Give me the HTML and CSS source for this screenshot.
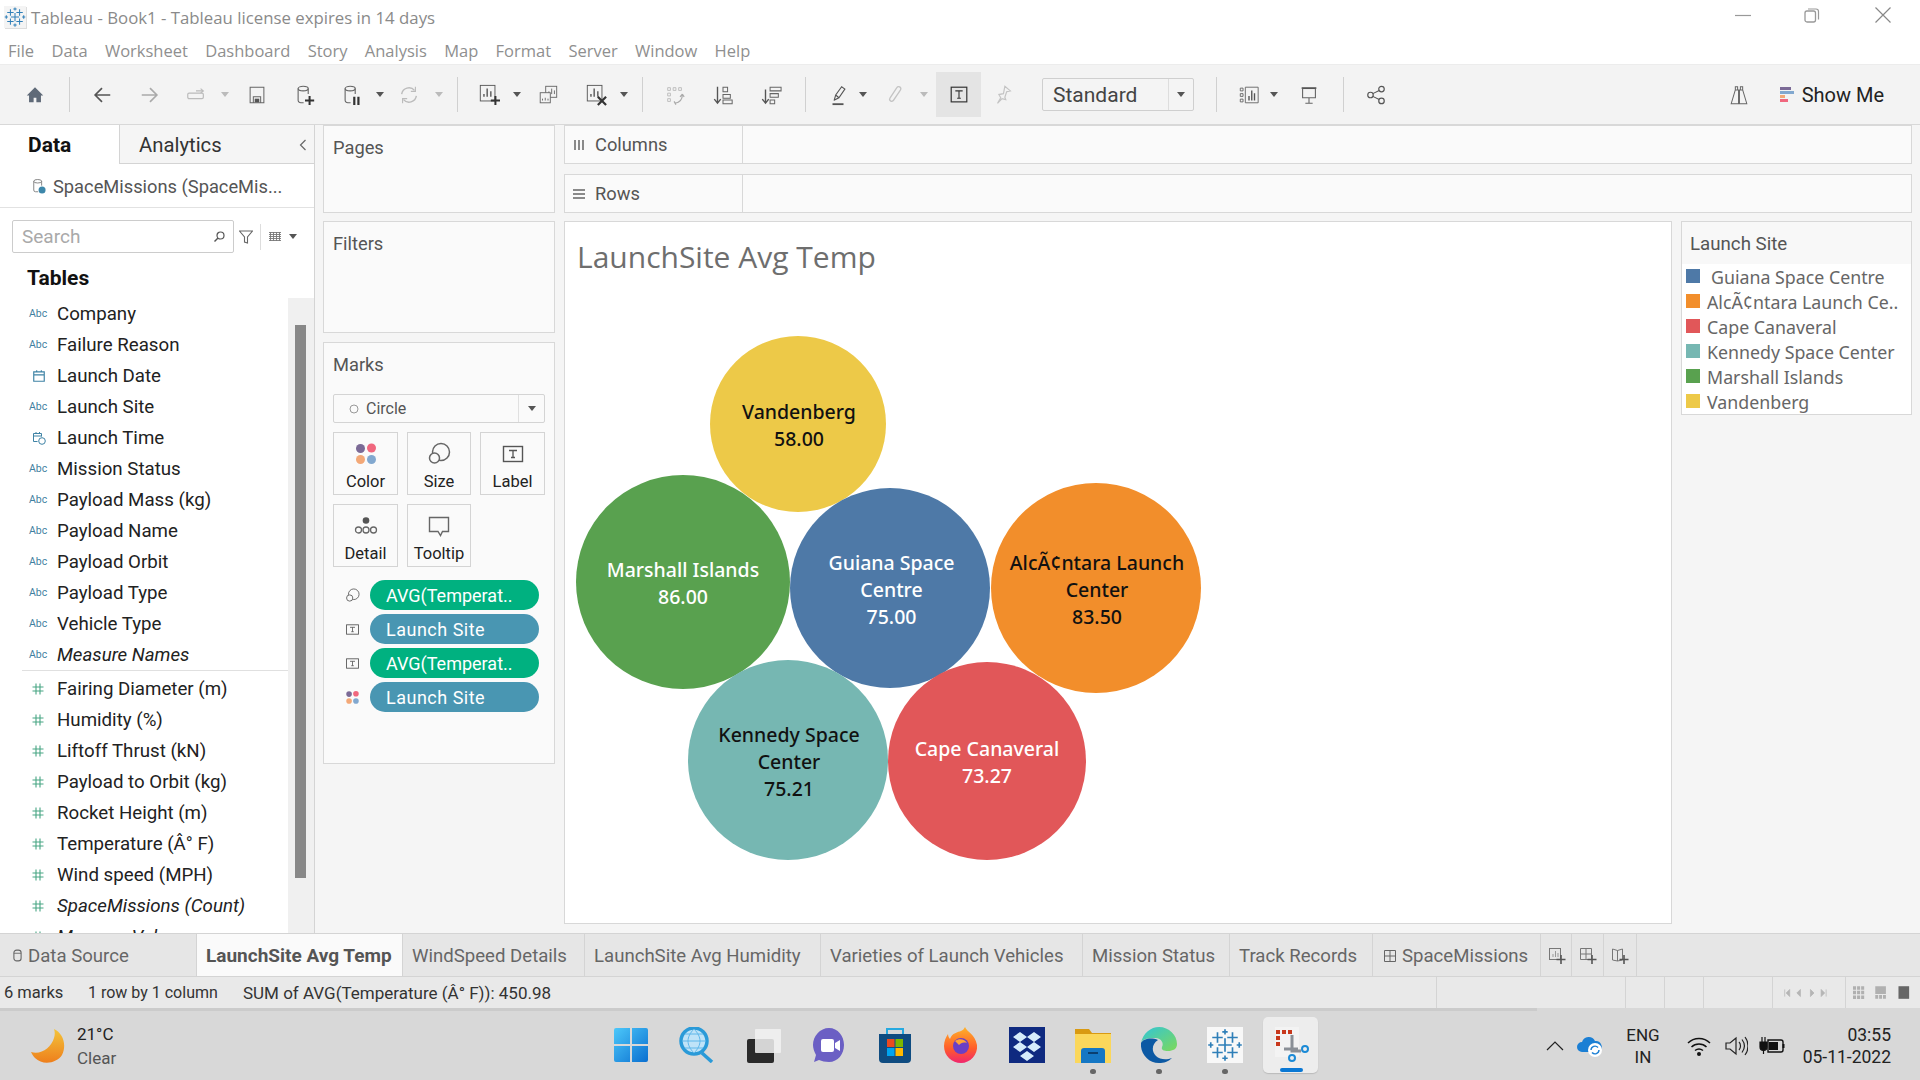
FILE: index.html
```html
<!DOCTYPE html>
<html lang="en">
<head>
<meta charset="utf-8">
<title>Tableau - Book1</title>
<link rel="stylesheet" href="styles.css">
</head>
<body>
<svg class="defs" width="0" height="0">
  <defs>
    <symbol id="tabl" viewBox="0 0 24 24"><g fill="none" stroke="#2f7fb8" stroke-width="1.100"><path d="M12 7.500v9M7.500 12h9M7 3.500v7M3.500 7h7M17 3.500v7M13.500 7h7M7 13.500v7M3.500 17h7M17 13.500v7M13.500 17h7M12 1.500v3.500M10.200 3.200h3.600M12 19v3.500M10.200 20.800h3.600M2.500 10.200v3.600M.8 12h3.400M21.500 10.200v3.600M19.800 12h3.400"/></g></symbol>
    <symbol id="tbox" viewBox="0 0 24 24"><rect x="2.500" y="4.500" width="19" height="15" fill="none" stroke="#555" stroke-width="1.400"/><path d="M8 8.500h8M12 8.500v7M10 15.500h4" fill="none" stroke="#555" stroke-width="1.300"/></symbol>
    <symbol id="size" viewBox="0 0 24 24"><circle cx="14" cy="10" r="8.500" fill="none" stroke="#666" stroke-width="1.500"/><circle cx="7.500" cy="16" r="5" fill="#fafafa" stroke="#666" stroke-width="1.500"/></symbol>
    <symbol id="dots" viewBox="0 0 24 24"><circle cx="6.500" cy="6.500" r="4.500" fill="#7b6a96"/><circle cx="17.500" cy="6" r="4.500" fill="#f0677e"/><circle cx="6.500" cy="17.500" r="4.500" fill="#f3a877"/><circle cx="17.500" cy="17.500" r="4.500" fill="#82a8cf"/></symbol>
    <symbol id="hash" viewBox="0 0 12 12"><path d="M4 0.500v11M8 0.500v11M0.500 4h11M0.500 8h11" fill="none" stroke="#47a583" stroke-width="1.100"/></symbol>
    <symbol id="plusbar" viewBox="0 0 24 24"><rect x="2.500" y="1.500" width="16" height="17" fill="none" stroke="#555"/><path d="M6.500 14v-3M10 14V5M14 14V8" stroke="#555" stroke-width="1.500"/><path d="M19 13v10M14 18h10" stroke="#333" stroke-width="2.200"/></symbol>
  </defs>
</svg>

<header class="titlebar">
  <svg class="logo" viewBox="0 0 24 24"><use href="#tabl"/></svg>
  <span class="title-text">Tableau - Book1 - Tableau license expires in 14 days</span>
  <div class="winbtns">
    <svg class="win" viewBox="0 0 16 16"><path d="M0 8.500h16" stroke="#999" stroke-width="1.200"/></svg>
    <svg class="win" viewBox="0 0 16 16"><rect x="1" y="4" width="10.500" height="11" rx="2" fill="none" stroke="#999" stroke-width="1.300"/><path d="M4 2h8a2.500 2.500 0 0 1 2.500 2.500v8" fill="none" stroke="#999" stroke-width="1.200"/></svg>
    <svg class="win" viewBox="0 0 16 16"><path d="M0.500 0.500l15 15M15.500 0.500l-15 15" stroke="#888" stroke-width="1.200"/></svg>
  </div>
</header>

<nav class="menu">
  <span>File</span><span>Data</span><span>Worksheet</span><span>Dashboard</span><span>Story</span><span>Analysis</span><span>Map</span><span>Format</span><span>Server</span><span>Window</span><span>Help</span>
</nav>

<div class="toolbar">
  <svg class="ti" viewBox="0 0 24 24"><path d="M12 3.500L3 12.500h2.500V20h5v-5h3v5h5v-7.500H21z" fill="#5f6a78"/></svg>
  <i class="sep"></i>
  <svg class="ti" viewBox="0 0 24 24"><path d="M21 12H5M12 4.500L4.500 12l7.500 7.500" fill="none" stroke="#555" stroke-width="1.800"/></svg>
  <svg class="ti" viewBox="0 0 24 24"><path d="M3 12h16M12 4.500l7.500 7.500-7.500 7.500" fill="none" stroke="#aaa" stroke-width="1.800"/></svg>
  <svg class="ti" viewBox="0 0 24 24"><rect x="3" y="10" width="17" height="6" rx="1.500" fill="none" stroke="#bbb" stroke-width="1.300"/><path d="M12 7.500h8M17 5l3 2.500-3 2.500" fill="none" stroke="#bbb" stroke-width="1.300"/></svg>
  <i class="car off"></i>
  <svg class="ti" viewBox="0 0 24 24"><path d="M4.500 3.500h15v17h-15zM8 20v-6h8v6" fill="none" stroke="#666" stroke-width="1.100"/><rect x="9.500" y="16" width="5" height="4" fill="#555"/></svg>
  <svg class="ti" viewBox="0 0 24 24"><ellipse cx="10" cy="5" rx="5.500" ry="2.500" fill="none" stroke="#666" stroke-width="1.200"/><path d="M4.500 5v13a3 3 0 0 0 3 2.500h3M15.500 5v6" fill="none" stroke="#666" stroke-width="1.200"/><path d="M17 13v10M12 18h10" stroke="#333" stroke-width="2.200"/></svg>
  <svg class="ti" viewBox="0 0 24 24"><ellipse cx="10" cy="5" rx="5.500" ry="2.500" fill="none" stroke="#666" stroke-width="1.200"/><path d="M4.500 5v13a3 3 0 0 0 3 2.500h3M15.500 5v6" fill="none" stroke="#666" stroke-width="1.200"/><path d="M14.500 14v9M19 14v9" stroke="#333" stroke-width="2.400"/></svg>
  <i class="car"></i>
  <svg class="ti" viewBox="0 0 24 24"><path d="M4 11a8 8 0 0 1 14-4M20 13a8 8 0 0 1-14 4" fill="none" stroke="#bbb" stroke-width="1.500"/><path d="M19 3v5h-5M5 21v-5h5" fill="none" stroke="#bbb" stroke-width="1.200"/></svg>
  <i class="car off"></i>
  <i class="sep"></i>
  <svg class="ti" viewBox="0 0 24 24"><use href="#plusbar"/></svg>
  <i class="car"></i>
  <svg class="ti" viewBox="0 0 24 24"><rect x="9.500" y="2.500" width="12" height="12" fill="none" stroke="#666"/><path d="M13 11V8M16 11V5M19 11V7" stroke="#666"/><rect x="3.500" y="9.500" width="11" height="11" fill="#f3f3f3" stroke="#666"/><path d="M6 18v-2M9 18v-3M12 18v-2" stroke="#666"/></svg>
  <svg class="ti" viewBox="0 0 24 24"><rect x="2.500" y="1.500" width="16" height="17" fill="none" stroke="#555"/><path d="M6.500 14v-3M10 14V5M14 14V8" stroke="#555" stroke-width="1.500"/><path d="M14 14l9 9M23 14l-9 9" stroke="#333" stroke-width="2.400"/></svg>
  <i class="car"></i>
  <i class="sep"></i>
  <svg class="ti" viewBox="0 0 24 24"><path d="M4 4h3v3H4zM10 4h3v3h-3zM16 4h3v3h-3zM4 10h3v3H4zM4 16h3v3H4z" fill="none" stroke="#bbb"/><path d="M20 12c0 5-3 8-8 9M20 11l-2.500 3M20 11l2 3M11 19l2 3.500" fill="none" stroke="#aaa" stroke-width="1.300"/></svg>
  <svg class="ti" viewBox="0 0 24 24"><path d="M6 3v17M2.500 16.500L6 21l3.500-4.500" fill="none" stroke="#555" stroke-width="1.500"/><path d="M12 3.500h5v5h-5zM12 11.500h8v4h-8zM12 17.500h10v4H12z" fill="none" stroke="#666" stroke-width="1.100"/></svg>
  <svg class="ti" viewBox="0 0 24 24"><path d="M6 6v14M2.500 16.500L6 21l3.500-4.500" fill="none" stroke="#555" stroke-width="1.500"/><path d="M11 3.500h12v4H11zM11 10.500h9v4h-9zM11 17.500h5v4h-5z" fill="none" stroke="#666" stroke-width="1.100"/></svg>
  <i class="sep"></i>
  <svg class="ti" viewBox="0 0 24 24"><path d="M8 17l1.500-5L16 3l3.500 2.500L13 15l-5 2.500zM9.500 12l3.500 3" fill="none" stroke="#555" stroke-width="1.200"/><path d="M6 22h12" stroke="#555" stroke-width="2"/></svg>
  <i class="car"></i>
  <svg class="ti" viewBox="0 0 24 24"><path d="M17 8l-7 10c-1.500 2-5 0-3.500-2.500L14 4c1.500-2.500 5.500-.5 4 2.500l-8 12" fill="none" stroke="#c4c4c4" stroke-width="1.400"/></svg>
  <i class="car off"></i>
  <div class="tb-active"><svg class="ti" viewBox="0 0 24 24"><rect x="3.500" y="3.500" width="17" height="16" fill="none" stroke="#333" stroke-width="1.300"/><path d="M8 7.500h8M12 7.500v8M10 15.500h4" fill="none" stroke="#333" stroke-width="1.200"/></svg></div>
  <svg class="ti" viewBox="0 0 24 24"><path d="M14 2.500l6 5-4 1-2 6 1 2.500-4-1-5 5 3.500-6-2-3.500 5-1z" fill="none" stroke="#c4c4c4" stroke-width="1.300"/></svg>
  <div class="select"><span class="select-text">Standard</span><span class="select-drop"><i class="car"></i></span></div>
  <i class="sep"></i>
  <svg class="ti" viewBox="0 0 24 24"><path d="M2.500 4.500h3v3h-3zM2.500 10.500h3v3h-3zM2.500 16.500h3v3h-3zM8 3.500h14v17H8z" fill="none" stroke="#666"/><path d="M12 18v-5M15 18V7M18 18v-8" stroke="#555" stroke-width="1.500"/></svg>
  <i class="car"></i>
  <svg class="ti" viewBox="0 0 24 24"><path d="M4 4.500h16" stroke="#555" stroke-width="2"/><path d="M5 5v10h14V5M12 15v6M8 21h8" fill="none" stroke="#666" stroke-width="1.200"/></svg>
  <i class="sep"></i>
  <svg class="ti" viewBox="0 0 24 24"><circle cx="18" cy="5.500" r="3" fill="none" stroke="#555" stroke-width="1.300"/><circle cx="6" cy="12" r="3" fill="none" stroke="#555" stroke-width="1.300"/><circle cx="18" cy="18.500" r="3" fill="none" stroke="#555" stroke-width="1.300"/><path d="M8.500 10.500l7-3.500M8.500 13.500l7 3.500" stroke="#555" stroke-width="1.200"/></svg>
  <svg class="ti" viewBox="0 0 24 24"><path d="M8 6.500V3h2.500v3.500M13.500 6.500V3H16v3.500M8 6.500L3.500 21.500h8V6.500zM16 6.500l4.500 15h-8V6.500zM11.500 11h1" fill="none" stroke="#666" stroke-width="1.100"/></svg>
  <div class="showme"><svg class="sm-icon" viewBox="0 0 14 16"><rect width="11" height="3" fill="#7b6a96"/><rect y="4" width="14" height="3" fill="#82a8cf"/><rect y="8" width="5" height="3" fill="#f3a877"/><rect y="12" width="8" height="3" fill="#f0677e"/></svg><span>Show Me</span></div>
</div>

<main class="main">
  <aside class="side">
    <div class="side-tabs">
      <div class="stab on">Data</div>
      <div class="stab">Analytics<svg class="chev" viewBox="0 0 8 12"><path d="M6.500 1L1.500 6l5 5" fill="none" stroke="#666" stroke-width="1.200"/></svg></div>
    </div>
    <div class="source">
      <svg class="src-ic" viewBox="0 0 16 18"><ellipse cx="6.500" cy="3" rx="4.500" ry="2" fill="none" stroke="#777"/><path d="M2 3v10a2 2 0 0 0 2 2h3M11 3v5" fill="none" stroke="#777"/><circle cx="11.500" cy="13" r="4" fill="#3d87aa"/></svg>
      <span>SpaceMissions (SpaceMis...</span>
    </div>
    <div class="searchrow">
      <div class="search"><span>Search</span><svg class="mag" viewBox="0 0 12 12"><circle cx="7.500" cy="4.500" r="3.500" fill="none" stroke="#555" stroke-width="1.200"/><path d="M5 7l-3.500 3.500" stroke="#555" stroke-width="1.400"/></svg></div>
      <svg class="funnel" viewBox="0 0 14 14"><path d="M0.500 1h13L8.500 7v6l-3-1V7z" fill="none" stroke="#666" stroke-width="1.100"/></svg>
      <i class="vline"></i>
      <svg class="gridic" viewBox="0 0 12 9"><path d="M0 .5h12M0 2.500h12M0 4.500h12M0 6.500h12M0 8.500h12M1.500 0v9M4.500 0v9M7.500 0v9M10.500 0v9" stroke="#777" stroke-width=".9"/></svg>
      <i class="car small-car"></i>
    </div>
    <h2 class="tables">Tables</h2>
    <div class="fields-wrap">
      <div class="fields">
        <div class="fld"><span class="abc">Abc</span>Company</div>
        <div class="fld"><span class="abc">Abc</span>Failure Reason</div>
        <div class="fld"><svg class="cal" viewBox="0 0 12 12"><path d="M1.500 2.500h9v8h-9zM1.500 5h9M4 1v2M8 1v2" fill="none" stroke="#3f83a5"/></svg>Launch Date</div>
        <div class="fld"><span class="abc">Abc</span>Launch Site</div>
        <div class="fld"><svg class="cal" viewBox="0 0 14 14"><path d="M1.500 2.500h8M1.500 2.500v8h4M1.500 5h8M9.500 2.500v3M4 1v2M7.500 1v2" fill="none" stroke="#3f83a5"/><circle cx="10" cy="10" r="3.300" fill="none" stroke="#3f83a5"/></svg>Launch Time</div>
        <div class="fld"><span class="abc">Abc</span>Mission Status</div>
        <div class="fld"><span class="abc">Abc</span>Payload Mass (kg)</div>
        <div class="fld"><span class="abc">Abc</span>Payload Name</div>
        <div class="fld"><span class="abc">Abc</span>Payload Orbit</div>
        <div class="fld"><span class="abc">Abc</span>Payload Type</div>
        <div class="fld"><span class="abc">Abc</span>Vehicle Type</div>
        <div class="fld calc"><span class="abc">Abc</span>Measure Names</div>
        <div class="fdiv"></div>
        <div class="fld"><svg class="hs"><use href="#hash"/></svg>Fairing Diameter (m)</div>
        <div class="fld"><svg class="hs"><use href="#hash"/></svg>Humidity (%)</div>
        <div class="fld"><svg class="hs"><use href="#hash"/></svg>Liftoff Thrust (kN)</div>
        <div class="fld"><svg class="hs"><use href="#hash"/></svg>Payload to Orbit (kg)</div>
        <div class="fld"><svg class="hs"><use href="#hash"/></svg>Rocket Height (m)</div>
        <div class="fld"><svg class="hs"><use href="#hash"/></svg>Temperature (Â° F)</div>
        <div class="fld"><svg class="hs"><use href="#hash"/></svg>Wind speed (MPH)</div>
        <div class="fld calc"><svg class="hs"><use href="#hash"/></svg>SpaceMissions (Count)</div>
        <div class="fld calc"><svg class="hs"><use href="#hash"/></svg>Measure Values</div>
      </div>
      <div class="sb"><div class="sb-thumb"></div></div>
    </div>
  </aside>

  <section class="cards">
    <div class="card pages"><div class="card-h">Pages</div></div>
    <div class="card filters"><div class="card-h">Filters</div></div>
    <div class="card marks">
      <div class="card-h">Marks</div>
      <div class="mark-sel"><svg class="ring" viewBox="0 0 10 10"><circle cx="5" cy="5" r="4" fill="none" stroke="#999"/></svg><span class="mark-name">Circle</span><span class="mark-drop"><i class="car"></i></span></div>
      <div class="mark-grid">
        <div class="mbtn"><svg class="mi" viewBox="0 0 24 24"><use href="#dots"/></svg><span>Color</span></div>
        <div class="mbtn"><svg class="mi" viewBox="0 0 24 24"><use href="#size"/></svg><span>Size</span></div>
        <div class="mbtn"><svg class="mi" viewBox="0 0 24 24"><use href="#tbox"/></svg><span>Label</span></div>
        <div class="mbtn"><svg class="mi" viewBox="0 0 24 24"><circle cx="12" cy="6.500" r="3.300" fill="#555"/><circle cx="4.500" cy="16" r="3" fill="none" stroke="#666" stroke-width="1.300"/><circle cx="12" cy="16" r="3" fill="none" stroke="#666" stroke-width="1.300"/><circle cx="19.500" cy="16" r="3" fill="none" stroke="#666" stroke-width="1.300"/></svg><span>Detail</span></div>
        <div class="mbtn"><svg class="mi" viewBox="0 0 24 24"><path d="M2.500 3.500h19v14h-6l-2 4-2.500-4H2.500z" fill="none" stroke="#666" stroke-width="1.400"/></svg><span>Tooltip</span></div>
      </div>
      <div class="pills">
        <svg class="pi" viewBox="0 0 24 24"><use href="#size"/></svg><div class="pill g">AVG(Temperat..</div>
        <svg class="pi" viewBox="0 0 24 24"><use href="#tbox"/></svg><div class="pill b">Launch Site</div>
        <svg class="pi" viewBox="0 0 24 24"><use href="#tbox"/></svg><div class="pill g">AVG(Temperat..</div>
        <svg class="pi" viewBox="0 0 24 24"><use href="#dots"/></svg><div class="pill b">Launch Site</div>
      </div>
    </div>
  </section>

  <section class="work">
    <div class="shelf"><div class="shelf-l"><svg class="shic" viewBox="0 0 12 12"><path d="M2 1v10M6 1v10M10 1v10" stroke="#666" stroke-width="1.500"/></svg>Columns</div></div>
    <div class="shelf"><div class="shelf-l"><svg class="shic" viewBox="0 0 12 12"><path d="M0 2h12M0 6h12M0 10h12" stroke="#666" stroke-width="1.500"/></svg>Rows</div></div>
    <div class="stage">
      <div class="view">
        <div class="vtitle">LaunchSite Avg Temp</div>
        <div class="bubble yellow">Vandenberg<br>58.00</div>
        <div class="bubble green lt">Marshall Islands<br>86.00</div>
        <div class="bubble blue lt">Guiana Space<br>Centre<br>75.00</div>
        <div class="bubble orange">AlcÃ¢ntara Launch<br>Center<br>83.50</div>
        <div class="bubble teal">Kennedy Space<br>Center<br>75.21</div>
        <div class="bubble red lt">Cape Canaveral<br>73.27</div>
      </div>
      <div class="legend">
        <div class="lg-h">Launch Site</div>
        <div class="lg-i"><i class="sw c1"></i><span class="first">Guiana Space Centre</span></div>
        <div class="lg-i"><i class="sw c2"></i><span>AlcÃ¢ntara Launch Ce..</span></div>
        <div class="lg-i"><i class="sw c3"></i><span>Cape Canaveral</span></div>
        <div class="lg-i"><i class="sw c4"></i><span>Kennedy Space Center</span></div>
        <div class="lg-i"><i class="sw c5"></i><span>Marshall Islands</span></div>
        <div class="lg-i"><i class="sw c6"></i><span>Vandenberg</span></div>
      </div>
    </div>
  </section>
</main>

<div class="tabs">
  <div class="tab ds"><svg class="tabic1" viewBox="0 0 10 14"><rect x="1" y="1" width="8" height="12" rx="3" fill="none" stroke="#666" stroke-width="1.200"/><path d="M1 4.500h8" stroke="#666"/></svg>Data Source</div>
  <div class="tab act">LaunchSite Avg Temp</div>
  <div class="tab">WindSpeed Details</div>
  <div class="tab">LaunchSite Avg Humidity</div>
  <div class="tab">Varieties of Launch Vehicles</div>
  <div class="tab">Mission Status</div>
  <div class="tab">Track Records</div>
  <div class="tab"><svg class="tabic" viewBox="0 0 12 12"><path d="M.5.500h11v11H.5zM6 .5v11M.5 6h11" fill="none" stroke="#666"/></svg>SpaceMissions</div>
  <div class="tab ic"><svg class="addic" viewBox="0 0 18 18"><rect x="1.500" y="1.500" width="11" height="11" fill="none" stroke="#777"/><path d="M5 10V7M7.500 10V4M10 10V6" stroke="#999"/><path d="M13 8v9M8.500 12.500h9" stroke="#555" stroke-width="1.600"/></svg></div>
  <div class="tab ic"><svg class="addic" viewBox="0 0 18 18"><path d="M1.500 1.500h11v11h-11zM7 1.500v11M1.500 7h11" fill="none" stroke="#777"/><path d="M13 8v9M8.500 12.500h9" stroke="#555" stroke-width="1.600"/></svg></div>
  <div class="tab ic"><svg class="addic" viewBox="0 0 18 18"><path d="M1.500 2l5 1.500 5-1.500v11l-5 1-5-1zM6.500 3.500V14" fill="none" stroke="#777"/><path d="M13 8v9M8.500 12.500h9" stroke="#555" stroke-width="1.600"/></svg></div>
</div>

<div class="status">
  <span class="st1">6 marks</span><span class="st2">1 row by 1 column</span><span class="st3">SUM of AVG(Temperature (Â° F)): 450.98</span>
  <div class="cell c-a"></div><div class="cell c-b"></div><div class="cell c-c"></div><div class="cell c-d"></div>
  <div class="cell pager"><svg viewBox="0 0 70 12" class="pg"><path d="M1 1v10M8 1L3 6l5 5zM23 1l-5 5 5 5zM37 1l5 5-5 5zM52 1l5 5-5 5zM59 1v10" fill="#b5b5b5" stroke="#b5b5b5"/></svg></div>
  <div class="cell views"><svg viewBox="0 0 62 14" class="vw"><path d="M0 0h3v3H0zM4 0h3v3H4zM8 0h3v3H8zM0 4h3v3H0zM4 4h3v3H4zM8 4h3v3H8zM0 8h3v3H0zM4 8h3v3H4zM8 8h3v3H8z" fill="#b0b0b0" transform="scale(1.050 1.200)"/><path d="M23 0h11v8H23zM23 9h3v4h-3zM27 9h3v4h-3zM31 9h3v4h-3z" fill="#b0b0b0"/><rect x="47" y="0" width="11" height="13" fill="#666"/></svg></div>
</div>

<footer class="taskbar">
  <div class="weather">
    <svg class="moon" viewBox="0 0 34 36"><defs><linearGradient id="mg" x1="0" y1="0" x2="0" y2="1"><stop offset="0" stop-color="#f3c43a"/><stop offset="1" stop-color="#ee7f1c"/></linearGradient></defs><path d="M23 1C32 5 36 17 31 27 26 35 12 38 4 30 2 28 1 26 0 24 10 27 20 20 23 10 24 7 24 4 23 1z" fill="url(#mg)"/></svg>
    <div class="w-text"><div class="w-t">21°C</div><div class="w-s">Clear</div></div>
  </div>
  <div class="tslots">
    <div class="tslot"><svg class="tic" viewBox="0 0 36 36"><defs><linearGradient id="wg" x1="0" y1="0" x2="1" y2="1"><stop offset="0" stop-color="#4cc8fa"/><stop offset="1" stop-color="#0a6fd0"/></linearGradient></defs><path d="M1 3a2 2 0 0 1 2-2h14v16H1zM19 1h14a2 2 0 0 1 2 2v14H19zM1 19h16v16H3a2 2 0 0 1-2-2zM19 19h16v14a2 2 0 0 1-2 2H19z" fill="url(#wg)"/></svg></div>
    <div class="tslot"><svg class="tic" viewBox="0 0 36 36"><circle cx="15" cy="14" r="13" fill="#bfe3f8" stroke="#2a9ad8" stroke-width="3.500"/><path d="M3 14h24M15 2c-8 8-8 16 0 24M15 2c8 8 8 16 0 24M6 7h18M6 21h18" fill="none" stroke="#5fb7ea"/><path d="M23 26l10 9" stroke="#2a9ad8" stroke-width="3.500"/></svg></div>
    <div class="tslot"><svg class="tic" viewBox="0 0 36 36"><rect x="2" y="12" width="27" height="24" rx="2" fill="#2a2a2a"/><rect x="10" y="2" width="26" height="24" rx="1" fill="#f2f2f2" opacity=".85"/></svg></div>
    <div class="tslot"><svg class="tic" viewBox="0 0 36 36"><path d="M18 1c9 0 15 8 15 17s-6 17-15 17c-4 0-7-1-10-2l-5 2 2-7C3 24 2 21 2 18 2 9 9 1 18 1z" fill="#6b5fc4"/><rect x="10" y="12" width="13" height="13" rx="2" fill="#fff"/><path d="M24 16l5-3v11l-5-3z" fill="#fff"/></svg></div>
    <div class="tslot"><svg class="tic" viewBox="0 0 36 36"><path d="M2 7h32v25a4 4 0 0 1-4 4H6a4 4 0 0 1-4-4z" fill="#0f4c81"/><path d="M10 7V2h16v5" fill="none" stroke="#26a9e0" stroke-width="2"/><rect x="10" y="12" width="7.500" height="8" fill="#ea4a1f"/><rect x="18.500" y="12" width="7.500" height="8" fill="#7db700"/><rect x="10" y="21" width="7.500" height="8" fill="#00a4ef"/><rect x="18.500" y="21" width="7.500" height="8" fill="#ffb900"/></svg></div>
    <div class="tslot"><svg class="tic" viewBox="0 0 36 36"><defs><linearGradient id="ff" x1="0" y1="0" x2="0" y2="1"><stop offset="0" stop-color="#ffb32a"/><stop offset=".6" stop-color="#ff5c2b"/><stop offset="1" stop-color="#f0266e"/></linearGradient></defs><path d="M22 0c2 5 10 7 12 18 1 10-7 18-16 18S1 29 1 19c0-5 2-9 4-12 0 2 1 4 2 5 2-6 8-7 11-8 2-1 3-2 4-4z" fill="url(#ff)"/><circle cx="18" cy="19" r="8" fill="#6a3fc4"/><path d="M12 14c4-3 10-2 12 2-4-1-6 0-8 2z" fill="#ffa436"/></svg></div>
    <div class="tslot"><svg class="tic" viewBox="0 0 36 36"><rect width="36" height="36" fill="#0f2a80"/><path d="M11 5l7 5-7 5-7-5zM25 5l7 5-7 5-7-5zM11 15l7 5-7 5-7-5zM25 15l7 5-7 5-7-5zM18 24l7 5-7 5-7-5z" fill="#d6ecfb"/></svg></div>
    <div class="tslot"><svg class="tic" viewBox="0 0 36 36"><path d="M0 2h14l3 4h19v30H0z" fill="#d99a12"/><path d="M0 7h36v29H0z" fill="#fbd75b"/><path d="M6 36V24a3 3 0 0 1 3-3h18a3 3 0 0 1 3 3v12z" fill="#1577c4"/><path d="M13 26h10" stroke="#0a3f70" stroke-width="2"/></svg><i class="dot"></i></div>
    <div class="tslot"><svg class="tic" viewBox="0 0 36 36"><defs><linearGradient id="eg1" x1="0" y1="0" x2="1" y2="1"><stop offset="0" stop-color="#31c5d8"/><stop offset="1" stop-color="#7dd95a"/></linearGradient></defs><path d="M0 16C2 6 10 0 18 0c10 0 18 8 18 17 0 5-4 7-9 7-4 0-7-1-6-4 2-3 0-9-7-9-7 0-13 1-14 5z" fill="url(#eg1)"/><path d="M0 16c-1 10 7 20 18 20 5 0 9-1 13-5-5 2-12 2-16-2-5-5-4-12 2-16-7-3-15-1-17 3z" fill="#0c59a4"/></svg><i class="dot"></i></div>
    <div class="tslot"><svg class="tic" viewBox="0 0 36 36"><rect width="36" height="36" fill="#f8f8f8"/><use href="#tabl" x="0" y="0" width="36" height="36"/></svg><i class="dot"></i></div>
    <div class="tslot active"><svg class="tic" viewBox="0 0 36 36"><rect x="2" y="0" width="24" height="30" fill="#f3f3f3"/><path d="M3 3h4v4H3zM9 3h4v4H9zM15 3h4v4h-4zM3 9h4v4H3zM3 15h4v4H3z" fill="#c8381c"/><path d="M19 8v16l9 0" fill="none" stroke="#8a8f96" stroke-width="3"/><path d="M11 22h14" stroke="#8a8f96" stroke-width="3"/><circle cx="32" cy="22" r="3" fill="none" stroke="#1b8ad6" stroke-width="2"/><circle cx="19" cy="31" r="3" fill="none" stroke="#1b8ad6" stroke-width="2"/></svg><i class="bar"></i></div>
  </div>
  <div class="tray">
    <svg class="chevup" viewBox="0 0 18 12"><path d="M1 10l8-8 8 8" fill="none" stroke="#222" stroke-width="1.200"/></svg>
    <svg class="cloud" viewBox="0 0 26 24"><path d="M5 18a5 5 0 0 1 0-10 7 7 0 0 1 13-1 6 6 0 0 1 4 11z" fill="#1b7fd4"/><circle cx="18" cy="16" r="7" fill="#fff"/><path d="M14 16a4 4 0 0 1 7-2.500M22 16a4 4 0 0 1-7 2.500" fill="none" stroke="#1b7fd4" stroke-width="1.400"/></svg>
    <div class="lang">ENG<br>IN</div>
    <svg class="sysi" viewBox="0 0 24 24"><path d="M1 9c6-6 16-6 22 0M4.500 13c4-4 11-4 15 0M8 16.500c2.500-2 5.500-2 8 0" fill="none" stroke="#111" stroke-width="1.500"/><circle cx="12" cy="20" r="2" fill="#111"/></svg>
    <svg class="sysi" viewBox="0 0 24 24"><path d="M2 9v6h4l6 5V4L6 9z" fill="none" stroke="#222" stroke-width="1.200"/><path d="M15 8c2 2 2 6 0 8M18 5.500c3 4 3 9 0 13M21 3c4 5 4 13 0 18" fill="none" stroke="#222" stroke-width="1.200"/></svg>
    <svg class="sysi batt" viewBox="0 0 26 24"><path d="M9 6h13a2 2 0 0 1 2 2v8a2 2 0 0 1-2 2H9z" fill="none" stroke="#111" stroke-width="1.400"/><rect x="10" y="8" width="9" height="8" fill="#111"/><path d="M24.500 10v4" stroke="#111" stroke-width="2"/><path d="M1 8h7v5a3 3 0 0 1-7 0zM3 3v5M6 3v5M4.500 16v4" fill="#111" stroke="#111" stroke-width="1.200"/></svg>
    <div class="clock">03:55<br>05-11-2022</div>
  </div>
</footer>
</body>
</html>
```
FILE: styles.css
```css
* { box-sizing: border-box; }
html, body { margin: 0; padding: 0; }
body {
  width: 1920px; height: 1080px; overflow: hidden;
  display: flex; flex-direction: column;
  background: #f5f5f5; color: #333;
  font-family: Roboto, "Noto Sans", sans-serif;
}
.defs { position: absolute; }
i { display: block; font-style: normal; }

/* title + menu */
.titlebar { height: 34px; flex: none; background: #fff; display: flex; align-items: center; padding-left: 4px; }
.logo { width: 22px; height: 22px; background: #f4f4f4; margin-right: 5px; box-shadow: 1px 1px 0 #ddd; }
.title-text { font: 16.800px "Open Sans", sans-serif; color: #8a8a8a; }
.winbtns { margin-left: auto; display: grid; grid-template-columns: 69px 71px 16px; padding-right: 29px; }
.win { width: 16px; height: 16px; margin-bottom: 4px; }
.menu { height: 30px; flex: none; background: #fff; display: flex; gap: 17.300px; padding: 2px 0 0 8px; align-items: center; font: 16.500px "Open Sans", sans-serif; color: #8f8f8f; }

/* toolbar */
.toolbar {
  height: 61px; flex: none; background: #f3f3f3; border-top: 1px solid #ececec; border-bottom: 1px solid #d8d8d8;
  display: grid; align-items: center; padding-left: 23px; padding-right: 36px;
  grid-template-columns: 46px 21px 48px 46px 37px 24px 48px 47px 36px 21px 38px 22px 20px 36px 23px 48px 36px 22px 21px 48px 48px 46px 21px 33px 24px 37px 16px 55px 51px 174px 21px 33px 27px 46px 21px 1fr 53px auto;
}
.ti { width: 22px; height: 22px; display: block; margin-left: 1px; }
.sep { width: 1px; height: 35px; background: #d0d0d0; }
.car { width: 0; height: 0; border-left: 4px solid transparent; border-right: 4px solid transparent; border-top: 5px solid #555; }
.car.off { border-top-color: #bbb; }
.tb-active { width: 45px; height: 45px; background: #e4e4e4; display: flex; align-items: center; justify-content: center; }
.select { width: 152px; height: 33px; border: 1px solid #cfcfcf; border-radius: 2px; display: flex; align-items: center; background: #f4f4f4; }
.select-text { width: 125px; padding-left: 10px; font-size: 21px; color: #444; }
.select-drop { flex: 1; height: 100%; border-left: 1px solid #ddd; display: flex; align-items: center; justify-content: center; }
.showme { display: flex; align-items: center; gap: 8px; font-size: 20px; color: #222; }
.sm-icon { width: 14px; height: 16px; }

/* main */
.main { height: 808px; flex: none; display: flex; background: #f5f5f5; overflow: hidden; }
.side { width: 315px; flex: none; background: #fff; border-right: 1px solid #d4d4d4; display: flex; flex-direction: column; }
.side-tabs { display: flex; height: 39px; flex: none; }
.stab { display: flex; align-items: center; font-size: 20.300px; color: #333; background: #f5f5f5; flex: 1; padding: 1px 0 0 19px; border-left: 1px solid #d4d4d4; border-bottom: 1px solid #d4d4d4; }
.stab.on { flex: none; width: 119px; padding-left: 28px; font-size: 21px; font-weight: 700; color: #111; background: #fff; border: 0; }
.chev { width: 8px; height: 12px; margin-left: auto; margin-right: 7px; }
.source { height: 44px; flex: none; display: flex; align-items: center; padding: 2px 0 0 32px; gap: 7px; font-size: 18.300px; color: #555; border-bottom: 1px solid #e2e2e2; }
.src-ic { width: 14px; height: 17px; }
.searchrow { height: 45px; flex: none; display: flex; align-items: center; padding: 12px 0 0 12px; }
.search { width: 222px; height: 33px; border: 1px solid #ccc; border-radius: 2px; display: flex; align-items: center; justify-content: space-between; padding: 0 8px 0 9px; font-size: 19px; color: #a9a9a9; }
.mag { width: 12px; height: 12px; }
.funnel { width: 14px; height: 14px; margin-left: 5px; }
.vline { width: 1px; height: 26px; background: #ddd; margin-left: 7px; }
.gridic { width: 12px; height: 9px; margin-left: 8px; }
.small-car { margin-left: 8px; }
.tables { margin: 0; height: 45px; flex: none; padding: 4px 0 0 27px; display: flex; align-items: center; font-size: 21px; font-weight: 700; color: #111; }
.fields-wrap { flex: 1; display: flex; min-height: 0; overflow: hidden; }
.fields { flex: 1; min-width: 0; }
.fld { height: 31px; display: flex; align-items: center; font-size: 18.700px; color: #222; }
.fld.calc { font-style: italic; }
.abc { width: 57px; padding-left: 29px; font-size: 10.500px; color: #3f7f9f; flex: none; font-style: normal; }
.cal { width: 14px; height: 14px; margin: 0 11px 0 32px; flex: none; }
.hs { width: 12px; height: 12px; margin: 0 13px 0 32px; flex: none; }
.fdiv { height: 1px; margin: 0 0 2px 22px; background: #e0e0e0; }
.sb { width: 26px; flex: none; background: #f0f0f0; padding: 27px 8px 0 7px; }
.sb-thumb { height: 553px; background: #888; }

/* cards */
.cards { width: 232px; flex: none; margin-left: 8px; display: flex; flex-direction: column; }
.card { border: 1px solid #d8d8d8; background: #fafafa; padding: 0 9px; }
.card-h { font-size: 18.300px; color: #555; height: 43px; display: flex; align-items: center; }
.pages { height: 88px; }
.filters { height: 112px; margin-top: 8px; }
.marks { height: 422px; margin-top: 9px; }
.mark-sel { height: 29px; margin-top: 8px; width: 212px; border: 1px solid #d4d4d4; border-radius: 2px; display: flex; align-items: center; font-size: 16px; color: #555; }
.ring { width: 10px; height: 10px; margin: 0 7px 0 15px; }
.mark-name { flex: 1; }
.mark-drop { width: 26px; height: 100%; border-left: 1px solid #e0e0e0; display: flex; align-items: center; justify-content: center; }
.mark-grid { display: grid; grid-template-columns: 65px 64px 65px; column-gap: 9px; row-gap: 9px; margin-top: 9px; width: 212px; }
.mbtn { height: 63px; border: 1px solid #d4d4d4; display: flex; flex-direction: column; align-items: center; padding-top: 9px; font-size: 16.500px; color: #222; gap: 6px; }
.mi { width: 24px; height: 24px; flex: none; }
.pills { display: grid; grid-template-columns: 37px 169px; row-gap: 4px; margin-top: 13px; align-items: center; }
.pi { width: 15px; height: 15px; margin-left: 12px; }
.pill { height: 30px; border-radius: 15px; color: #fff; font-size: 18px; padding-left: 16px; display: flex; align-items: center; }
.pill.g { background: #00b180; }
.pill.b { background: #4996b2; letter-spacing: .5px; }

/* shelves + view */
.work { flex: 1; margin: 0 8px 0 9px; display: flex; flex-direction: column; min-width: 0; }
.shelf { height: 39px; flex: none; border: 1px solid #d8d8d8; background: #fafafa; margin-bottom: 10px; }
.shelf-l { width: 178px; height: 100%; border-right: 1px solid #d8d8d8; display: flex; align-items: center; padding-left: 8px; gap: 10px; font-size: 18.300px; color: #555; }
.shic { width: 12px; height: 12px; }
.stage { display: flex; gap: 9px; margin-top: -2px; }
.view { position: relative; width: 1108px; height: 703px; background: #fff; border: 1px solid #d8d8d8; }
.vtitle { padding: 14px 0 0 12px; font-family: "Open Sans", sans-serif; font-size: 30px; color: #6e6e6e; }
.bubble { position: absolute; border-radius: 50%; text-align: center; font: 500 19.500px/27px "Noto Sans", sans-serif; color: #111; }
.yellow { left: 145px; top: 114px; width: 176px; height: 176px; background: #edc948; padding: 62px 0 0 2px; }
.green { left: 11px; top: 253px; width: 214px; height: 214px; background: #59a14f; padding-top: 81px; }
.blue { left: 225px; top: 266px; width: 200px; height: 200px; background: #4e79a7; padding: 61px 0 0 3px; }
.orange { left: 426px; top: 261px; width: 210px; height: 210px; background: #f28e2b; padding: 66px 0 0 2px; }
.teal { left: 123px; top: 438px; width: 200px; height: 200px; background: #76b7b2; padding: 61px 0 0 2px; }
.red { left: 323px; top: 440px; width: 198px; height: 198px; background: #e15759; padding-top: 73px; }
.lt { color: #fff; }
.legend { width: 231px; height: 194px; background: #fff; border: 1px solid #d8d8d8; }
.lg-h { height: 42px; background: #f8f8f8; font-size: 18.700px; color: #555; display: flex; align-items: center; padding: 2px 0 0 8px; }
.lg-i { height: 25px; display: flex; align-items: center; font: 17.800px "Noto Sans", sans-serif; color: #666; white-space: nowrap; }
.sw { width: 14px; height: 14px; margin: 0 7px 2px 4px; flex: none; }
.first { padding-left: 4px; }
.c1 { background: #4e79a7; } .c2 { background: #f28e2b; } .c3 { background: #e15759; }
.c4 { background: #76b7b2; } .c5 { background: #59a14f; } .c6 { background: #edc948; }

/* tabs */
.tabs { height: 44px; flex: none; background: #e6e6e6; display: grid; border-top: 1px solid #d4d4d4; border-bottom: 1px solid #d4d4d4;
  grid-template-columns: 196px 207px 182px 236px 262px 147px 143px 168px 31px 32px 33px; }
.tab { display: flex; align-items: center; padding: 1px 0 0 9px; font-size: 18.600px; color: #666; border-right: 1px solid #d4d4d4; white-space: nowrap; }
.tab.ds { padding-left: 13px; border-right: 0; }
.tab.act { background: #fafafa; font-size: 19px; font-weight: 700; color: #555; padding-left: 9px; border-left: 1px solid #d4d4d4; }
.tabic1 { width: 9px; height: 13px; margin-right: 6px; }
.tabic { width: 12px; height: 12px; margin: 0 6px 0 2px; }
.tab.ic { padding-left: 7px; }
.addic { width: 18px; height: 18px; }

/* status */
.status { height: 31px; flex: none; background: #e9e9e9; display: flex; align-items: center; font-size: 16px; color: #333; }
.st1 { margin-left: 4px; width: 84px; font-size: 16.500px; }
.st2 { width: 155px; }
.st3 { width: 1193px; font-size: 17px; }
.cell { height: 100%; border-left: 1px solid #d4d4d4; display: flex; align-items: center; justify-content: center; }
.c-a { width: 189px; } .c-b { width: 39px; } .c-c { width: 39px; } .c-d { width: 69px; }
.pager { width: 73px; }
.views { flex: 1; }
.pg { width: 50px; height: 10px; }
.vw { width: 60px; height: 14px; }

/* taskbar */
.taskbar { height: 72px; flex: none; background: #d8d8d8; display: flex; border-top: 3px solid; border-image: linear-gradient(90deg, #cbcbcb 80%, #d8d8d8 80%) 1; position: relative; }
.weather { width: 598px; flex: none; display: flex; align-items: center; padding-left: 31px; }
.moon { width: 34px; height: 36px; margin-right: 12px; }
.w-t { font-size: 17px; color: #222; line-height: 24px; }
.w-s { font-size: 17px; color: #555; line-height: 24px; }
.tslots { display: grid; grid-template-columns: repeat(11, 66px); flex: none; }
.tslot { position: relative; display: flex; flex-direction: column; align-items: center; padding-top: 16px; }
.tic { width: 36px; height: 36px; flex: none; position: relative; }
.dot { width: 6px; height: 5px; border-radius: 3px; background: #666; margin-top: 6px; }
.tslot.active::before { content: ""; position: absolute; left: 5px; right: 6px; top: 6px; height: 56px; background: #ededed; border-radius: 5px; box-shadow: 0 1px 1px #bbb; }
.bar { width: 23px; height: 4px; border-radius: 2px; background: #0a78d4; margin-top: 5px; position: relative; }
.tray { flex: 1; display: grid; align-items: center; padding-left: 221px; padding-right: 29px; grid-template-columns: 32px 46px 64px 37px 35px 26px 1fr; }
.chevup { width: 20px; height: 12px; }
.cloud { width: 26px; height: 24px; }
.lang { width: 40px; text-align: center; font-size: 17px; line-height: 22px; color: #222; }
.sysi { width: 24px; height: 24px; }
.batt { width: 26px; }
.clock { text-align: right; font-size: 17.500px; line-height: 22px; color: #222; }
```
